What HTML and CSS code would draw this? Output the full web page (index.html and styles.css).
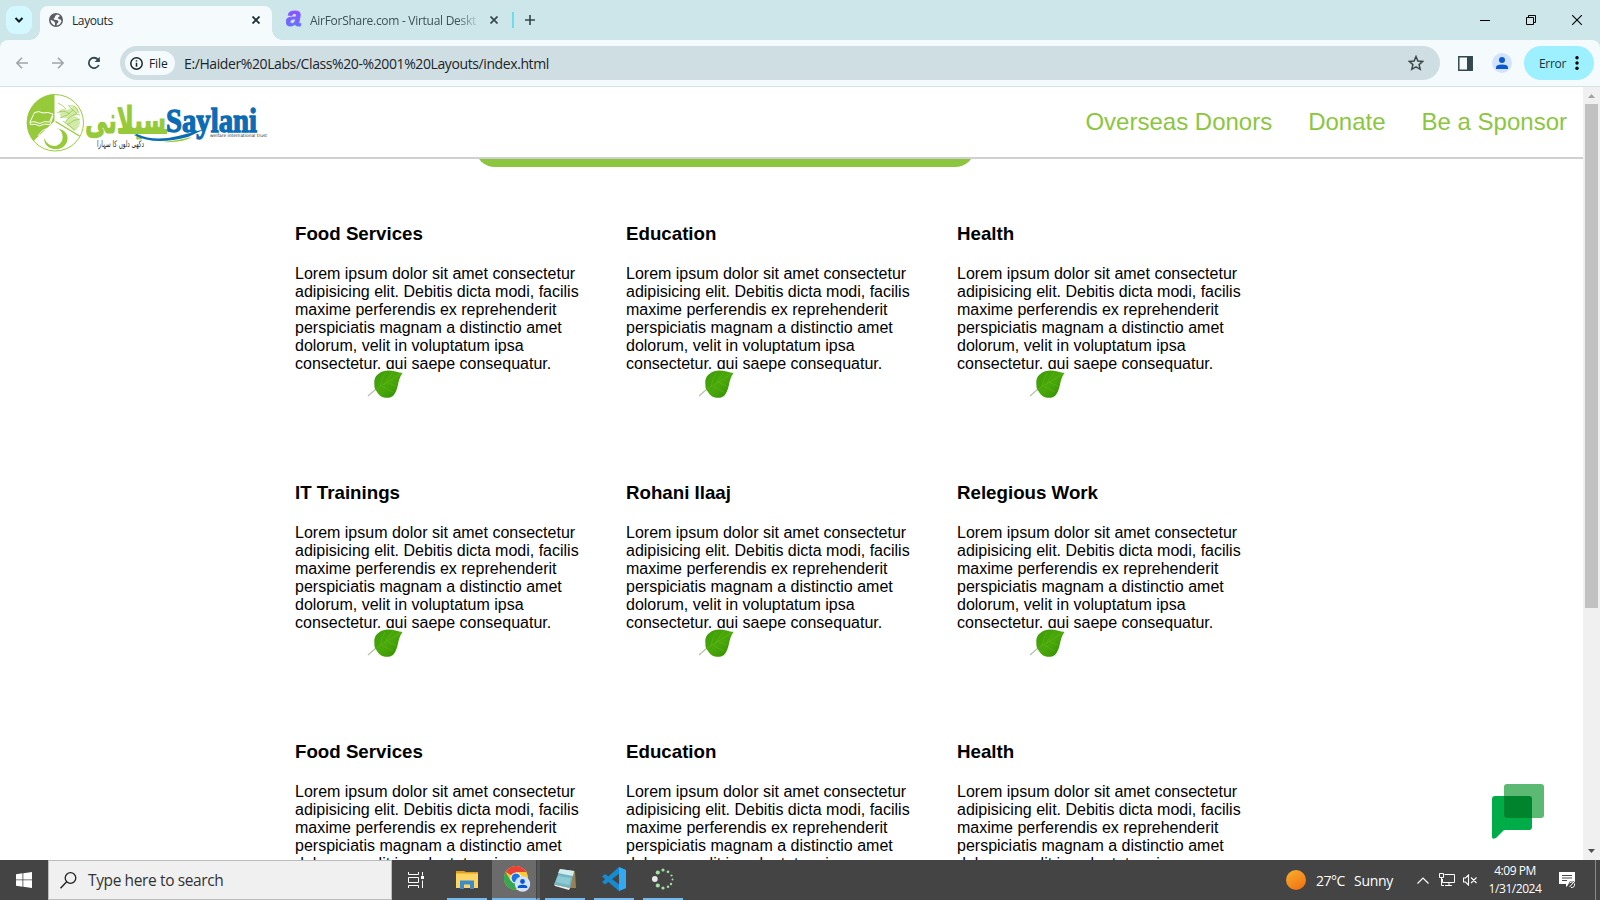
FILE: index.html
```html
<!DOCTYPE html>
<html lang="en">
<head>
<meta charset="utf-8">
<title>Layouts</title>
<link rel="stylesheet" href="styles.css">
</head>
<body>
<svg width="0" height="0" class="defs">
  <defs>
    <linearGradient id="leafFill" x1="0" y1="0" x2="1" y2="1"><stop offset="0" stop-color="#3c9a08"/><stop offset=".5" stop-color="#4aa80a"/><stop offset="1" stop-color="#2f8a04"/></linearGradient>
    <symbol id="leaf" viewBox="0 1 42 32">
      <path d="M5 28 L13 21" stroke="#b5bfa8" stroke-width="1.1" fill="none"/>
      <path d="M39.500 5 C33 4 23 -.5 16 5.500 C11 9 11 13 11.500 18 C11 20 13 22 14 24 C17 30 25 31.500 30 28 C36 22 34 12 39.500 5Z" fill="url(#leafFill)"/>
      <path d="M12 22 Q24 14 39 5 M17 19 Q18 12 22 5 M21 17 Q25 10 30 4 M19 18 Q25 22 30 24 M24 14 Q29 17 33 18" stroke="#5db818" stroke-width=".6" fill="none"/>
    </symbol>
  </defs>
</svg>
<div class="screen">
  <div class="tabstrip">
    <div class="tabsearch"><svg width="10" height="8" viewBox="0 0 10 8"><path d="M1.500 2 L5 5.500 L8.500 2" fill="none" stroke="#111d20" stroke-width="2"/></svg></div>
    <div class="tab active">
      <svg class="favicon" width="14" height="14" viewBox="0 0 14 14"><circle cx="7" cy="7" r="7" fill="#5b5f64"/><path d="M8.500 1.500 Q5.500 2.500 6 4.200 L4.500 5.500 Q5 7 7.500 7 Q9.500 7 9.500 9 Q9 10 8 10.500 L7.500 12.500 Q11.500 12 12.500 8 L11.500 6.500 9.500 6 9 4.500 10.500 3.500 10.500 2.300Z M1.500 6.800 L4.500 8 6 9.500 6 12.400 Q2 11.500 1.500 6.800Z" fill="#f4fafc"/></svg>
      <span class="tab-title t1">Layouts</span>
      <svg class="x" width="8" height="8" viewBox="0 0 8 8"><path d="M.5.5 7.500 7.500M7.500.5.5 7.500" stroke="#1b2b2e" stroke-width="1.800"/></svg>
    </div>
    <div class="tab second">
      <span class="a-icon">a</span>
      <span class="tab-title t2">AirForShare.com - Virtual Deskt</span>
      <svg class="x" width="8" height="8" viewBox="0 0 8 8"><path d="M.5.5 7.500 7.500M7.500.5.5 7.500" stroke="#35484c" stroke-width="1.700"/></svg>
    </div>
    <i class="tabsep"></i>
    <svg class="plus" width="10" height="10" viewBox="0 0 10 10"><path d="M5 0V10M0 5H10" stroke="#33474b" stroke-width="1.600"/></svg>
    <div class="winctl">
      <svg width="10" height="10" viewBox="0 0 10 10"><path d="M0 5.500H10" stroke="#000"/></svg>
      <svg width="10" height="10" viewBox="0 0 10 10"><path d="M.5 2.500H7.500V9.500H.5ZM2.500 2.500V.5H9.500V7.500H7.500" fill="none" stroke="#000"/></svg>
      <svg width="10" height="10" viewBox="0 0 10 10"><path d="M0 0 10 10M10 0 0 10" stroke="#000" stroke-width="1.100"/></svg>
    </div>
  </div>
  <div class="toolbar">
    <svg class="nav-l" width="12" height="12" viewBox="0 0 12 12"><path d="M12 6H1M6 .8.9 6 6 11.200" fill="none" stroke="#9ea6a9" stroke-width="1.600"/></svg>
    <svg class="nav-r" width="12" height="12" viewBox="0 0 12 12"><path d="M0 6H11M6 .8 11.100 6 6 11.200" fill="none" stroke="#9ea6a9" stroke-width="1.600"/></svg>
    <svg class="reload" width="14" height="14" viewBox="0 0 14 14"><path d="M11.800 9A5.200 5.200 0 1 1 11 3.600L12 5" fill="none" stroke="#324a4f" stroke-width="1.800"/><path d="M12.800.8V6H7.600Z" fill="#324a4f"/></svg>
    <div class="omnibox">
      <div class="chip"><svg width="13" height="13" viewBox="0 0 13 13"><circle cx="6.500" cy="6.500" r="5.700" fill="none" stroke="#1a2529" stroke-width="1.500"/><path d="M6.500 5.700V9.700M6.500 3.200V4.600" stroke="#1a2529" stroke-width="1.500"/></svg><span>File</span></div>
      <span class="url">E:/Haider%20Labs/Class%20-%2001%20Layouts/index.html</span>
      <svg class="star" width="16" height="16" viewBox="0 0 16 16"><path d="M8 1.500 9.900 6 14.700 6.400 11.100 9.600 12.200 14.300 8 11.800 3.800 14.300 4.900 9.600 1.300 6.400 6.100 6Z" fill="none" stroke="#3e474a" stroke-width="1.500"/></svg>
    </div>
    <svg class="panel" width="15" height="15" viewBox="0 0 15 15"><path d="M.8.8H14.200V14.200H.8Z" fill="#f5fafd" stroke="#33494e" stroke-width="1.500"/><path d="M9 1H14.500V14H9Z" fill="#33494e"/></svg>
    <svg class="user" width="20" height="20" viewBox="0 0 20 20"><circle cx="10" cy="10" r="10" fill="#d3e3fd"/><circle cx="10" cy="7" r="3" fill="#0b57d0"/><path d="M4 16V14.500Q4 11.500 10 11.500T16 14.500V16Z" fill="#0b57d0"/></svg>
    <div class="error"><span>Error</span><svg width="4" height="14" viewBox="0 0 4 14"><circle cx="2" cy="1.800" r="1.700"/><circle cx="2" cy="7" r="1.700"/><circle cx="2" cy="12.200" r="1.700"/></svg></div>
  </div>
  <div class="view">
    <div class="site">
      <header class="site-head">
        <svg class="logo" width="250" height="64" viewBox="20 90 250 64">
          <circle cx="55.300" cy="122.800" r="28.200" fill="#fff" stroke="#9ccc3c" stroke-width="1"/>
          <path d="M54.500 121V94A28.800 28.800 0 0 0 33.500 141Z" fill="#96ca3a"/>
          <path d="M55.500 121.500 79.500 136" stroke="#96ca3a" stroke-width="1.300"/>
          <path d="M30 122 34.500 112.500Q39 110.500 43 113Q48 111.500 53 114L49.500 122Q44 120.500 40 123.500Q35 121 30 122L30.500 124.500Q36 123.500 39.500 126Q44 123 50 124.500L53 116" fill="none" stroke="#fff" stroke-width="1"/>
          <path d="M56 128Q71 131 66.500 143Q61 152 50 148Q44 145 44 138Q48 147 56 146Q65 142 62 133Q60 129 56 128Z" fill="#96ca3a"/>
          <path d="M38 136Q42 128 52 128" fill="none" stroke="#fff" stroke-width="1"/>
          <path d="M59 111Q63 107 67 110L74 106Q79 108 78 113L70 120Q65 117 61 118ZM64 122L72 116Q80 116 80 123Q79 129 74 131Z" fill="#d3ebaa"/>
          <path d="M58 103Q64 106 66 109M57 113Q63 109 70 114M67 125Q74 119 80 119M63 121L75 130M69 106Q76 104 79 113M60 118Q68 116 73 110M68 105L77 114M66 121Q73 112 80 115" fill="none" stroke="#84bd2b" stroke-width=".6"/>
          <text class="lg-ur" x="85" y="133" textLength="81" lengthAdjust="spacingAndGlyphs" direction="ltr">سیلانی</text>
          <path d="M119 129H167V134H119Z" fill="#96ca3a"/>
          <path d="M134 135Q154 146 188 137L205 129Q190 133 178 136Q154 142 137 134Z" fill="#0c6bb5"/>
          <path d="M162 142Q176 141 192 137Q184 143 162 142Z" fill="#96ca3a"/>
          <text class="lg-en" x="166" y="132" textLength="91" lengthAdjust="spacingAndGlyphs">Saylani</text>
          <text class="lg-sub" x="210" y="136.500" textLength="57" lengthAdjust="spacingAndGlyphs">welfare international trust</text>
          <text class="lg-tag" x="97" y="147" textLength="47" lengthAdjust="spacingAndGlyphs">دکھی دلوں کا سہارا</text>
        </svg>
        <nav class="links"><a>Overseas Donors</a><a>Donate</a><a>Be a Sponsor</a></nav>
      </header>
      <div class="banner"></div>
      <main class="grid">
        <section class="card"><h3>Food Services</h3><p>Lorem ipsum dolor sit amet consectetur adipisicing elit. Debitis dicta modi, facilis maxime perferendis ex reprehenderit perspiciatis magnam a distinctio amet dolorum, velit in voluptatum ipsa consectetur, qui saepe consequatur.</p><svg class="leaf"><use href="#leaf"/></svg></section>
        <section class="card"><h3>Education</h3><p>Lorem ipsum dolor sit amet consectetur adipisicing elit. Debitis dicta modi, facilis maxime perferendis ex reprehenderit perspiciatis magnam a distinctio amet dolorum, velit in voluptatum ipsa consectetur, qui saepe consequatur.</p><svg class="leaf"><use href="#leaf"/></svg></section>
        <section class="card"><h3>Health</h3><p>Lorem ipsum dolor sit amet consectetur adipisicing elit. Debitis dicta modi, facilis maxime perferendis ex reprehenderit perspiciatis magnam a distinctio amet dolorum, velit in voluptatum ipsa consectetur, qui saepe consequatur.</p><svg class="leaf"><use href="#leaf"/></svg></section>
        <section class="card"><h3>IT Trainings</h3><p>Lorem ipsum dolor sit amet consectetur adipisicing elit. Debitis dicta modi, facilis maxime perferendis ex reprehenderit perspiciatis magnam a distinctio amet dolorum, velit in voluptatum ipsa consectetur, qui saepe consequatur.</p><svg class="leaf"><use href="#leaf"/></svg></section>
        <section class="card"><h3>Rohani Ilaaj</h3><p>Lorem ipsum dolor sit amet consectetur adipisicing elit. Debitis dicta modi, facilis maxime perferendis ex reprehenderit perspiciatis magnam a distinctio amet dolorum, velit in voluptatum ipsa consectetur, qui saepe consequatur.</p><svg class="leaf"><use href="#leaf"/></svg></section>
        <section class="card"><h3>Relegious Work</h3><p>Lorem ipsum dolor sit amet consectetur adipisicing elit. Debitis dicta modi, facilis maxime perferendis ex reprehenderit perspiciatis magnam a distinctio amet dolorum, velit in voluptatum ipsa consectetur, qui saepe consequatur.</p><svg class="leaf"><use href="#leaf"/></svg></section>
        <section class="card"><h3>Food Services</h3><p>Lorem ipsum dolor sit amet consectetur adipisicing elit. Debitis dicta modi, facilis maxime perferendis ex reprehenderit perspiciatis magnam a distinctio amet dolorum, velit in voluptatum ipsa</p></section>
        <section class="card"><h3>Education</h3><p>Lorem ipsum dolor sit amet consectetur adipisicing elit. Debitis dicta modi, facilis maxime perferendis ex reprehenderit perspiciatis magnam a distinctio amet dolorum, velit in voluptatum ipsa</p></section>
        <section class="card"><h3>Health</h3><p>Lorem ipsum dolor sit amet consectetur adipisicing elit. Debitis dicta modi, facilis maxime perferendis ex reprehenderit perspiciatis magnam a distinctio amet dolorum, velit in voluptatum ipsa</p></section>
      </main>
      <svg class="chat" width="52" height="56" viewBox="0 0 52 56"><path d="M3 12H37Q40 12 40 15V43Q40 46 37 46H12L4 54Q0 56 0 53V15Q0 12 3 12Z" fill="#00ac47"/><rect x="12" width="40" height="34" rx="3" fill="#5bb974"/><path d="M12 12H37Q40 12 40 15V34H15Q12 34 12 31Z" fill="#00832d"/></svg>
    </div>
    <div class="scroll">
      <svg width="17" height="17" viewBox="0 0 17 17"><path d="M5 11 8.500 7 12 11Z" fill="#a3a3a3"/></svg>
      <i class="thumb"></i>
      <svg width="17" height="17" viewBox="0 0 17 17"><path d="M5 6 8.500 10 12 6Z" fill="#505050"/></svg>
    </div>
  </div>
  <footer class="taskbar">
    <div class="start"><svg width="16" height="16" viewBox="0 0 16 16"><path d="M0 2.200 6.500 1.300V7.500H0ZM7.300 1.200 16 0V7.500H7.300ZM0 8.300H6.500V14.700L0 13.800ZM7.300 8.300H16V16L7.300 14.800Z" fill="#fff"/></svg></div>
    <div class="search"><svg width="17" height="17" viewBox="0 0 17 17"><circle cx="10.500" cy="6" r="5.300" fill="none" stroke="#222" stroke-width="1.300"/><path d="M6.700 9.800.5 16.200" stroke="#222" stroke-width="1.400"/></svg><span>Type here to search</span></div>
    <div class="tb taskview"><svg width="17" height="16" viewBox="0 0 17 16"><path d="M.5 0V2.500H10.500V0M.5 16V13.500H10.500V16M.5 5.500H10.500V10.500H.5ZM14.500 0V3.500M14.500 8.500V16" fill="none" stroke="#fff"/><path d="M13 4H16V7H13Z" fill="#fff"/></svg></div>
    <div class="tb run"><svg width="22" height="19" viewBox="0 0 22 19"><path d="M0 1H8L10 2H22V18H0Z" fill="#e0a21c"/><path d="M0 3.500H22V18H0Z" fill="#fdd565"/><path d="M4 19V10.500H18V19H14V14.500H8V19Z" fill="#3c8ccb"/></svg></div>
    <div class="tb run chrome"><svg width="27" height="26" viewBox="0 0 27 26"><circle cx="12" cy="12" r="12" fill="#fcc934"/><path d="M12 12 1.600 6A12 12 0 0 1 22.400 6H12Z" fill="#ea4335"/><path d="M12 12 6.800 15 1.600 6A12 12 0 0 0 12 24L17 15Z" fill="#34a853"/><circle cx="12" cy="12" r="5.600" fill="#fff"/><circle cx="12" cy="12" r="4.500" fill="#1a73e8"/><circle cx="18.500" cy="18" r="7.700" fill="#d3e3fd"/><circle cx="18.500" cy="15.500" r="2.400" fill="#0b57d0"/><path d="M13.700 22V21Q14 18.800 18.500 18.800T23.300 21V22Z" fill="#0b57d0"/></svg><i></i></div>
    <div class="tb run note"><svg width="23" height="23" viewBox="0 0 23 23"><path d="M5 1.500 21 3 22 20 16 20Z" fill="#9a8155"/><path d="M6 1 20 3 16 20 0 16.500Z" fill="#72b5c4"/><path d="M6 1 20 3 19 8 4 5Z" fill="#d2edf0"/><path d="M4 8 17 10 15 17 2 14Z" fill="#a0d9df" opacity=".6"/><path d="M0 16.500 16 20 15 22 1 18Z" fill="#f0f1e8"/></svg></div>
    <div class="tb run"><svg width="24" height="24" viewBox="0 0 24 24"><path d="M17 0 24 3V21L17 24 0 9.500 3 7 18 18V6L3 17.500 0 15Z" fill="#168bd2"/><path d="M17 0 24 3V21L17 24Z" fill="#35a9ef"/></svg></div>
    <div class="tb run"><svg width="22" height="22" viewBox="0 0 22 22" fill="#a3dfa0"><circle cx="2.800" cy="11" r="2.900" fill="#e8e8e8"/><circle cx="5.800" cy="4.500" r="2.100"/><circle cx="11" cy="2" r="1.600"/><circle cx="16" cy="3.800" r="1.400"/><circle cx="19.500" cy="7.500" r="1.100"/><circle cx="20.500" cy="11.500" r="1"/><circle cx="19" cy="16" r="1.200"/><circle cx="16" cy="18.700" r="1.300"/><circle cx="11" cy="20" r="1.600"/><circle cx="5.800" cy="17.500" r="2.100"/></svg></div>
    <div class="tray">
      <i class="sun"></i><span class="temp">27°C</span><span class="sunny">Sunny</span>
      <svg class="up" width="12" height="7" viewBox="0 0 12 7"><path d="M.5 6.500 6 1 11.500 6.500" fill="none" stroke="#fff" stroke-width="1.200"/></svg>
      <svg class="net" width="16" height="14" viewBox="0 0 16 14"><path d="M5.500 1.500H15.500V9.500H3.500V6M10 9.500V12.500M6 12.500H13M.5.5H4.500V4.500H.5ZM2.500 4.500V12.500H5" fill="none" stroke="#fff"/></svg>
      <svg class="vol" width="15" height="12" viewBox="0 0 15 12"><path d="M.5 4H2.500L5.500 1V11L2.500 8H.5ZM8 3.500 13.500 9M13.500 3.500 8 9" fill="none" stroke="#fff" stroke-width="1.100"/></svg>
      <div class="clock"><span class="time">4:09 PM</span><span class="date">1/31/2024</span></div>
      <svg class="notif" width="17" height="17" viewBox="0 0 17 17"><path d="M0 0H16V12H10L7 15V12H0Z" fill="#fff"/><path d="M3 3.500H13M3 6H13M3 8.500H8" stroke="#444"/><circle cx="13" cy="12.500" r="3.500" fill="#444"/><path d="M10.500 15 15 10M10.500 11Q12 9.500 14 10M12 15.500Q16 16 15.500 11.500" stroke="#fff" fill="none"/></svg>
    </div>
  </footer>
</div>
</body>
</html>
```
FILE: styles.css
```css
* { box-sizing: border-box; }
body { margin: 0; background: #fff; font-family: "Liberation Sans", Arial, sans-serif; color: #000; }
svg { display: block; flex: none; }
.defs { position: absolute; }
.screen { width: 1600px; height: 900px; overflow: hidden; display: flex; flex-direction: column; }

.tabstrip, .toolbar, .taskbar { font-family: "Open Sans", "Noto Sans", sans-serif; display: flex; flex: none; white-space: nowrap; }
.tabstrip { height: 40px; background: #cde6ea; align-items: flex-start; z-index: 1; }
.tabsearch { width: 26px; height: 28px; margin: 6px 7px 0 6px; border-radius: 9px; background: #d3f8ff; display: flex; align-items: center; justify-content: center; }
.tab { display: flex; align-items: center; height: 34px; margin-top: 6px; font-size: 12px; }
.active { position: relative; width: 232px; background: #f5fafd; border-radius: 8px 8px 0 0; padding: 0 17px 6px 6px; margin-left: 1px; }
.active::before, .active::after { content: ""; position: absolute; bottom: 0; width: 10px; height: 10px; }
.active::before { left: -10px; background: radial-gradient(circle at 0 0, transparent 9.500px, #f5fafd 10px); }
.active::after { right: -10px; background: radial-gradient(circle at 100% 0, transparent 9.500px, #f5fafd 10px); }
.favicon { margin: 0 9px 0 3px; }
.tab-title { line-height: 16px; padding-top: 1px; }
.t1 { color: #1c2b2f; letter-spacing: -.4px; }
.active .x { margin-left: auto; margin-right: -5px; }
.second { width: 240px; padding: 0 0 6px 14px; }
.a-icon { font: italic bold 28px/20px "Liberation Sans", Arial, sans-serif; width: 19px; height: 24px; color: transparent; background: linear-gradient(#8a52ff 20%, #5a7bff); -webkit-background-clip: text; background-clip: text; -webkit-text-stroke: 1px transparent; margin: -2px 5px 0 0; }
.t2 { width: 167px; overflow: hidden; color: #3d5156; letter-spacing: -.28px; -webkit-mask-image: linear-gradient(90deg, #000 88%, transparent 102%); mask-image: linear-gradient(90deg, #000 88%, transparent 102%); }
.second .x { margin-left: 13px; }
.tabsep { width: 2px; height: 16px; margin: 12px 11px 0 0; background: #6fdceb; }
.plus { margin-top: 15px; }
.winctl { margin: 15px 18px 0 auto; display: flex; gap: 36px; }

.toolbar { height: 47px; background: #f5fafd; border-bottom: 1px solid #d4e1e6; border-radius: 8px 8px 0 0; align-items: center; box-shadow: 0 -8px 0 #cde6ea; }
.nav-l { margin-left: 16px; }
.nav-r { margin-left: 24px; }
.reload { margin-left: 23px; }
.omnibox { width: 1320px; height: 34px; margin-left: 19px; background: #cfdee3; border-radius: 17px; display: flex; align-items: center; padding: 0 16px 0 5px; }
.chip { width: 50px; height: 24px; border-radius: 12px; background: #f5fafd; display: flex; align-items: center; gap: 6px; padding-left: 5px; font-size: 12px; color: #14242a; }
.chip span { letter-spacing: -.1px; }
.url { margin-left: 9px; font-size: 14px; color: #1c2529; letter-spacing: -.4px; }
.star { margin-left: auto; }
.panel { margin-left: 18px; }
.user { margin-left: 19px; }
.error { width: 70px; height: 34px; margin-left: 12px; border-radius: 17px; background: #9df0ff; display: flex; align-items: center; padding: 0 15px; justify-content: space-between; font-size: 12px; letter-spacing: -.3px; color: #16353c; }

.view { flex: 1; min-height: 0; display: flex; overflow: hidden; }
.site { width: 1583px; position: relative; overflow: hidden; }
.site-head { height: 72px; border-bottom: 2px solid #d0d0d0; display: flex; justify-content: space-between; padding: 3px 16px 0 20px; }
.logo { overflow: visible; }
.links { display: flex; gap: 36px; padding-top: 18px; font-size: 24px; line-height: 28px; color: #8cc63f; }
.banner { width: 500px; height: 8px; margin-left: 475px; overflow: hidden; }
.banner::before { content: ""; display: block; height: 50px; margin: -42px 0 0; border-radius: 20px; background: #8cc63f; }
.grid { display: grid; grid-template-columns: repeat(3, 291px); grid-auto-rows: 259px; column-gap: 40px; margin: 56px 0 0 295px; }
.card { position: relative; }
.card h3 { font-size: 18.720px; line-height: 22px; margin: 0 0 20px; }
.card p { font-size: 16px; line-height: 18px; margin: 0; }
.leaf { position: absolute; left: 68px; top: 146px; width: 42px; height: 32px; background: #fff; }
.chat { position: absolute; left: 1492px; top: 697px; }
.scroll { width: 17px; background: #f0f0f0; display: flex; flex-direction: column; }
.thumb { height: 504px; width: 13px; margin: 0 2px auto; background: #c1c1c1; }

.lg-ur { font: bold 37px "DejaVu Sans", sans-serif; fill: #96ca3a; stroke: #96ca3a; stroke-width: 1px; }
.lg-en { font: bold 34px "Liberation Serif", serif; fill: #0c6bb5; stroke: #0c6bb5; stroke-width: 1.300px; }
.lg-sub { font: 4.500px "DejaVu Sans", sans-serif; fill: #333; }
.lg-tag { font: 9px "DejaVu Sans", sans-serif; fill: #222; }

.taskbar { height: 40px; background: #444; color: #fff; }
.start { width: 48px; display: flex; align-items: center; justify-content: center; }
.search { width: 344px; background: #f0f0f0; border: 1px solid #bcbcbc; display: flex; align-items: center; padding-left: 11px; gap: 11px; color: #333; }
.search span { letter-spacing: -.38px; font-size: 15.500px; }
.tb { width: 40px; margin-right: 9px; display: flex; align-items: center; justify-content: center; position: relative; }
.taskview { width: 48px; margin-right: 7px; }
.run { border-bottom: 2px solid #76b9ed; }
.chrome { width: 44px; background: #6b6b6b; margin: 0 9px 0 -4px; padding-left: 6px; }
.chrome i { position: absolute; left: 44px; top: 0; width: 4px; height: 40px; background: #555; border-bottom: 2px solid #5f9fd4; border-left: 1px solid #444; }
.tray { margin-left: auto; width: 314px; display: flex; align-items: center; font-size: 14px; }
.sun { width: 20px; height: 20px; border-radius: 50%; background: linear-gradient(150deg, #f7b22d, #f26a11); }
.temp { margin-left: 10px; width: 38px; letter-spacing: -.5px; }
.sunny { width: 49px; letter-spacing: -.3px; }
.up { margin-left: 14px; }
.net { margin-left: 10px; }
.vol { margin-left: 8px; }
.clock { width: 62px; margin-left: 6px; display: flex; flex-direction: column; align-items: center; font-size: 12px; line-height: 18px; letter-spacing: -.45px; }
.notif { margin-left: 13px; }
.tray::after { content: ""; width: 1px; height: 40px; background: #8a8a8a; margin-left: 19px; }
```
